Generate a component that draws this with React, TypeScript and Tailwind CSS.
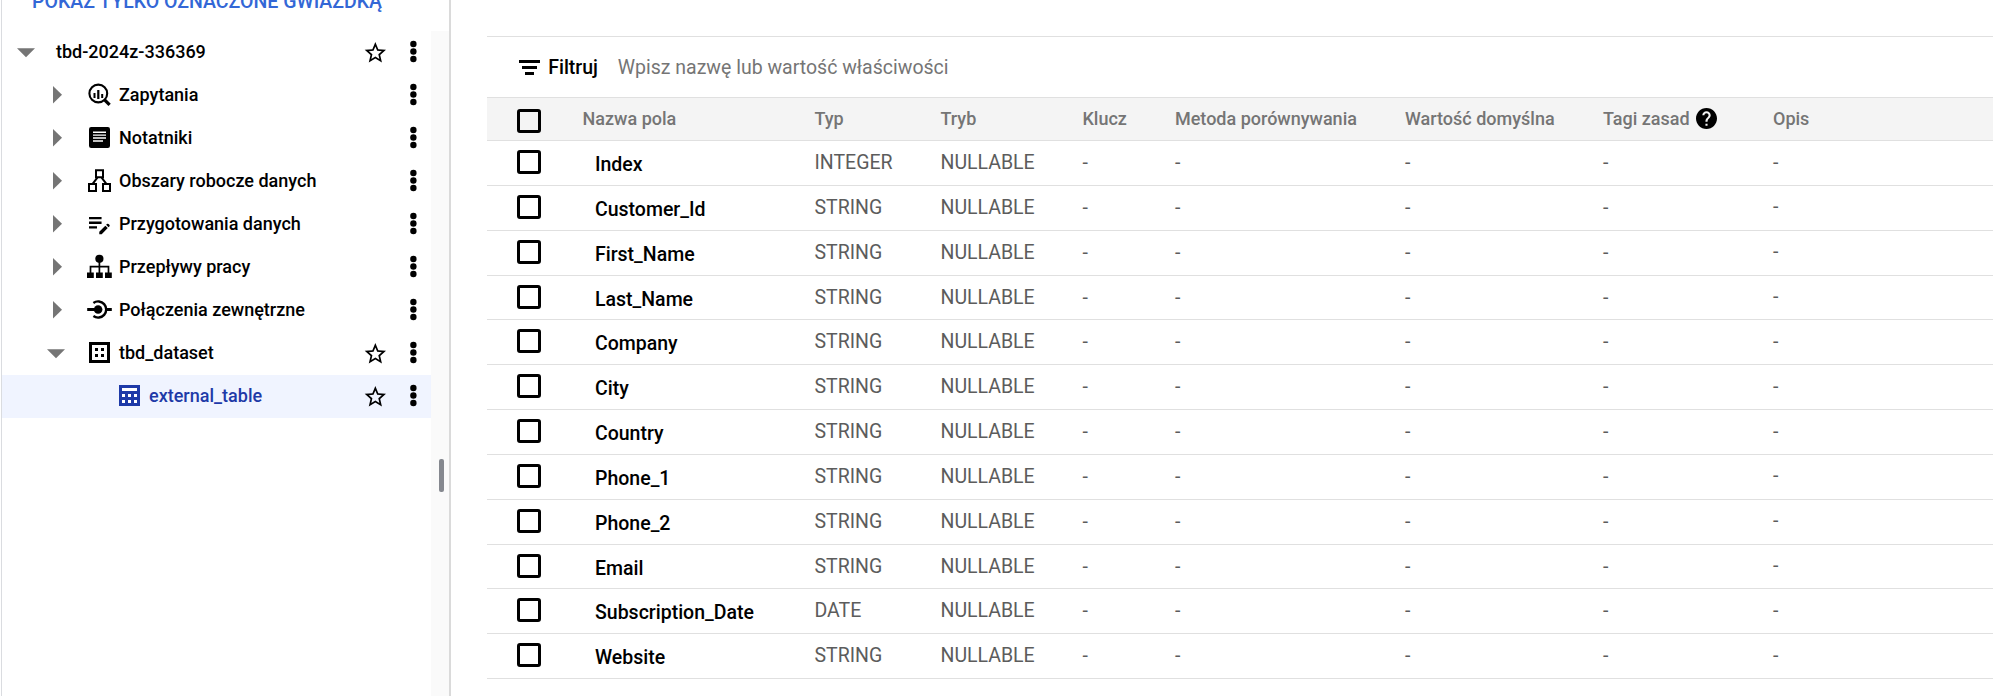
import React, { type ReactNode } from "react";

const GRID =
  "grid grid-cols-[95.6px_231.9px_126px_142px_92.5px_230px_198px_170px_1fr]";

const FIELDS: { name: string; type: string; height: string; raised?: boolean }[] = [
  { name: "Index", type: "INTEGER", height: "h-[45px]" },
  { name: "Customer_Id", type: "STRING", height: "h-[45px]", raised: true },
  { name: "First_Name", type: "STRING", height: "h-[45px]", raised: true },
  { name: "Last_Name", type: "STRING", height: "h-[44px]", raised: true },
  { name: "Company", type: "STRING", height: "h-[45px]" },
  { name: "City", type: "STRING", height: "h-[45px]" },
  { name: "Country", type: "STRING", height: "h-[45px]" },
  { name: "Phone_1", type: "STRING", height: "h-[45px]", raised: true },
  { name: "Phone_2", type: "STRING", height: "h-[45px]", raised: true },
  { name: "Email", type: "STRING", height: "h-[44px]", raised: true },
  { name: "Subscription_Date", type: "DATE", height: "h-[45px]" },
  { name: "Website", type: "STRING", height: "h-[45px]" },
];

function Glyph({ children }: { children: ReactNode }) {
  return (
    <svg width="27" height="43" viewBox="0 0 27 43" className="shrink-0">
      {children}
    </svg>
  );
}

const QueriesIcon = (
  <Glyph>
    <circle cx="12.3" cy="19.5" r="8.9" fill="none" stroke="currentColor" strokeWidth="2.1" />
    <path d="M18.6 25.8l5 5" stroke="currentColor" strokeWidth="3.2" />
    <path d="M7.5 19h2v5h-2zM11.2 16h2.2v9h-2.2zM15.2 20h2v4h-2z" fill="currentColor" />
  </Glyph>
);

const NotebooksIcon = (
  <Glyph>
    <rect x="3" y="10" width="21" height="21" rx="2.2" fill="currentColor" />
    <path d="M7 15.2h13M7 18.1h13M7 21h13M7 24h10" stroke="#fff" strokeWidth="1.4" />
  </Glyph>
);

const CanvasIcon = (
  <Glyph>
    <path
      d="M10 10.2h7v7h-7zM3 24h7v7H3zM17 24h7v7h-7zM11.4 17.6L6.8 23.6M15.6 17.6l4.6 6"
      fill="none"
      stroke="currentColor"
      strokeWidth="2"
    />
  </Glyph>
);

const PreparationIcon = (
  <Glyph>
    <path
      transform="translate(-.4 7.2) scale(1.14)"
      fill="currentColor"
      d="M3 10h11v2H3v-2zm0-2h11V6H3v2zm0 8h7v-2H3v2zm15.01-3.13.71-.71a.996.996 0 0 1 1.41 0l.71.71c.39.39.39 1.02 0 1.41l-.71.71-2.12-2.12zm-.71.71-5.3 5.3V21h2.12l5.3-5.3-2.12-2.12z"
    />
  </Glyph>
);

const WorkflowIcon = (
  <Glyph>
    <circle cx="13.4" cy="12.8" r="4.1" fill="currentColor" />
    <path d="M13.4 15v12M4.5 27v-6.4h18V27" fill="none" stroke="currentColor" strokeWidth="1.7" />
    <path d="M1 26.5h6.8V32H1zM10 26.5h6.8V32H10zM19 26.5h6.8V32H19z" fill="currentColor" />
  </Glyph>
);

const ConnectionIcon = (
  <Glyph>
    <circle cx="12.1" cy="20.5" r="4.3" fill="currentColor" />
    <path d="M7.4 13.9a8.1 8.1 0 1 1 0 13.2" fill="none" stroke="currentColor" strokeWidth="2.4" />
    <path d="M1.2 20.5h8M20 20.5h5.8" stroke="currentColor" strokeWidth="2.8" />
  </Glyph>
);

const DatasetIcon = (
  <Glyph>
    <rect x="4.5" y="11.5" width="18" height="18" fill="none" stroke="currentColor" strokeWidth="3" />
    <path d="M9 16h3v3H9zM15 16h3v3h-3zM9 22h3v3H9zM15 22h3v3h-3z" fill="currentColor" />
  </Glyph>
);

const TableIcon = (
  <Glyph>
    <path d="M3 10h21v21H3z" fill="currentColor" />
    <path
      d="M6 13h15v3H6zM6 19h3v3H6zM12 19h3v3h-3zM18 19h3v3h-3zM6 25h3v3H6zM12 25h3v3h-3zM18 25h3v3h-3z"
      fill="#fff"
    />
  </Glyph>
);

function Star() {
  return (
    <svg width="22" height="21" viewBox="1.35 2 20.65 19.4" preserveAspectRatio="none" className="mt-[11px] shrink-0">
      <path d="M22 9.24l-7.19-.62L12 2 9.19 8.63 2 9.24l5.46 4.73L5.82 21 12 17.27 18.18 21l-1.63-7.03L22 9.24zM12 15.4l-3.76 2.27 1-4.28-3.32-2.88 4.38-.38L12 6.1l1.71 4.04 4.38.38-3.32 2.88 1 4.28L12 15.4z" />
    </svg>
  );
}

function Kebab() {
  return (
    <svg width="8" height="43" viewBox="0 0 8 43" className="shrink-0">
      <circle cx="4.4" cy="13" r="3.2" />
      <circle cx="4.4" cy="20.5" r="3.2" />
      <circle cx="4.4" cy="28" r="3.2" />
    </svg>
  );
}

function Arrow({ open }: { open?: boolean }) {
  return (
    <svg width="18" height="43" viewBox="0 0 18 43" className="shrink-0 text-[#757575]">
      <path d={open ? "M0 17.3h18l-9 9z" : "M6 12v17.6l9-8.8z"} fill="currentColor" />
    </svg>
  );
}

type NodeProps = {
  label: string;
  indent: string;
  icon?: ReactNode;
  open?: boolean;
  leaf?: boolean;
  star?: boolean;
  selected?: boolean;
};

function TreeNode({ label, indent, icon, open, leaf, star, selected }: NodeProps) {
  return (
    <div className={`flex h-[43px] items-start pr-[14px] ${indent} ${selected ? "bg-[#f0f4ff]" : ""}`}>
      {!leaf && <Arrow open={open} />}
      <div className={`flex flex-1 items-start ${selected ? "text-[#1e3aa8]" : "text-black"}`}>
        {icon ? (
          <span className={`${leaf ? "" : "ml-[21px]"} mr-[6px]`}>{icon}</span>
        ) : (
          <span className="w-[21px]" />
        )}
        <span className="text-[18px] leading-[41px] font-medium whitespace-nowrap">{label}</span>
      </div>
      {star && <Star />}
      <span className="ml-[23px]">
        <Kebab />
      </span>
    </div>
  );
}

function Sidebar() {
  return (
    <aside className="ml-px flex w-[448px] shrink-0 flex-col border-l border-[#dadce0]">
      <div className="h-[31px] pl-[30px]">
        <div className="-mt-[10px] text-[19.5px] leading-[23px] font-medium whitespace-nowrap text-[#3367d6]">
          POKAŻ TYLKO OZNACZONE GWIAZDKĄ
        </div>
      </div>
      <div className="flex flex-1">
        <div className="w-[429px]">
          <TreeNode label="tbd-2024z-336369" indent="pl-[15px]" open star />
          <TreeNode label="Zapytania" indent="pl-[45px]" icon={QueriesIcon} />
          <TreeNode label="Notatniki" indent="pl-[45px]" icon={NotebooksIcon} />
          <TreeNode label="Obszary robocze danych" indent="pl-[45px]" icon={CanvasIcon} />
          <TreeNode label="Przygotowania danych" indent="pl-[45px]" icon={PreparationIcon} />
          <TreeNode label="Przepływy pracy" indent="pl-[45px]" icon={WorkflowIcon} />
          <TreeNode label="Połączenia zewnętrzne" indent="pl-[45px]" icon={ConnectionIcon} />
          <TreeNode label="tbd_dataset" indent="pl-[45px]" icon={DatasetIcon} open star />
          <TreeNode label="external_table" indent="pl-[114px]" icon={TableIcon} leaf star selected />
        </div>
        <div className="w-[18px] bg-[#fafafa] pt-[428px] pl-[8px]">
          <div className="h-[33px] w-[5px] rounded-[2px] bg-[#85888f]" />
        </div>
      </div>
    </aside>
  );
}

function Checkbox({ className }: { className: string }) {
  return <span className={`ml-[30px] block size-6 rounded-[3px] border-3 border-black ${className}`} />;
}

function SchemaTable() {
  return (
    <main className="flex-1 pt-[36px] pl-[36px]">
      <div className="flex h-[61px] items-start border-t border-[#e0e0e0] pt-[10px] pl-[32px] text-[19.5px] leading-[41px] whitespace-nowrap">
        <svg width="21" height="15" viewBox="0 0 21 15" className="mt-[13px]">
          <path d="M0 0h21v3H0zM3 6h15v3H3zM6 12h9v3H6z" />
        </svg>
        <span className="ml-[8.2px] font-medium">Filtruj</span>
        <span className="ml-[19.7px] text-[#757575]">Wpisz nazwę lub wartość właściwości</span>
      </div>
      <div className={`${GRID} h-[44px] items-start border-y border-[#e0e0e0] bg-[#f4f4f4] text-[18px] leading-[41px] font-medium whitespace-nowrap text-[#757575]`}>
        <Checkbox className="mt-[11px]" />
        <span>Nazwa pola</span>
        <span>Typ</span>
        <span>Tryb</span>
        <span>Klucz</span>
        <span>Metoda porównywania</span>
        <span>Wartość domyślna</span>
        <span className="flex items-start">
          Tagi zasad
          <svg width="21" height="21" viewBox="2 2 20 20" className="mt-[10px] ml-[6.5px] text-black">
            <path
              fill="currentColor"
              d="M12 2C6.48 2 2 6.48 2 12s4.480 10 10 10 10-4.480 10-10S17.520 2 12 2zm1 17h-2v-2h2v2zm2.070-7.750l-.9.920C13.450 12.900 13 13.500 13 15h-2v-.5c0-1.100.45-2.100 1.170-2.830l1.240-1.260c.37-.36.59-.86.59-1.410 0-1.100-.9-2-2-2s-2 .9-2 2H8c0-2.210 1.790-4 4-4s4 1.790 4 4c0 .88-.36 1.680-.93 2.250z"
            />
          </svg>
        </span>
        <span>Opis</span>
      </div>
      {FIELDS.map((f) => (
        <div
          key={f.name}
          className={`${GRID} ${f.height} items-start border-b border-[#e0e0e0] text-[19.5px] leading-[43px] whitespace-nowrap text-[#5c5c5c]`}
        >
          <Checkbox className="mt-[9px]" />
          <span className="pt-[2px] pl-[12.4px] leading-[43px] font-medium text-black">{f.name}</span>
          <span>{f.type}</span>
          <span>NULLABLE</span>
          <span>-</span>
          <span>-</span>
          <span>-</span>
          <span>-</span>
          <span className={f.raised ? "leading-[41px]" : ""}>-</span>
        </div>
      ))}
    </main>
  );
}

export default function App() {
  return (
    <div className="flex h-[696px] w-[1993px] overflow-hidden bg-white font-['Roboto',sans-serif] text-black">
      <Sidebar />
      <div className="w-[2px] shrink-0 bg-[#dadada]" />
      <SchemaTable />
    </div>
  );
}
